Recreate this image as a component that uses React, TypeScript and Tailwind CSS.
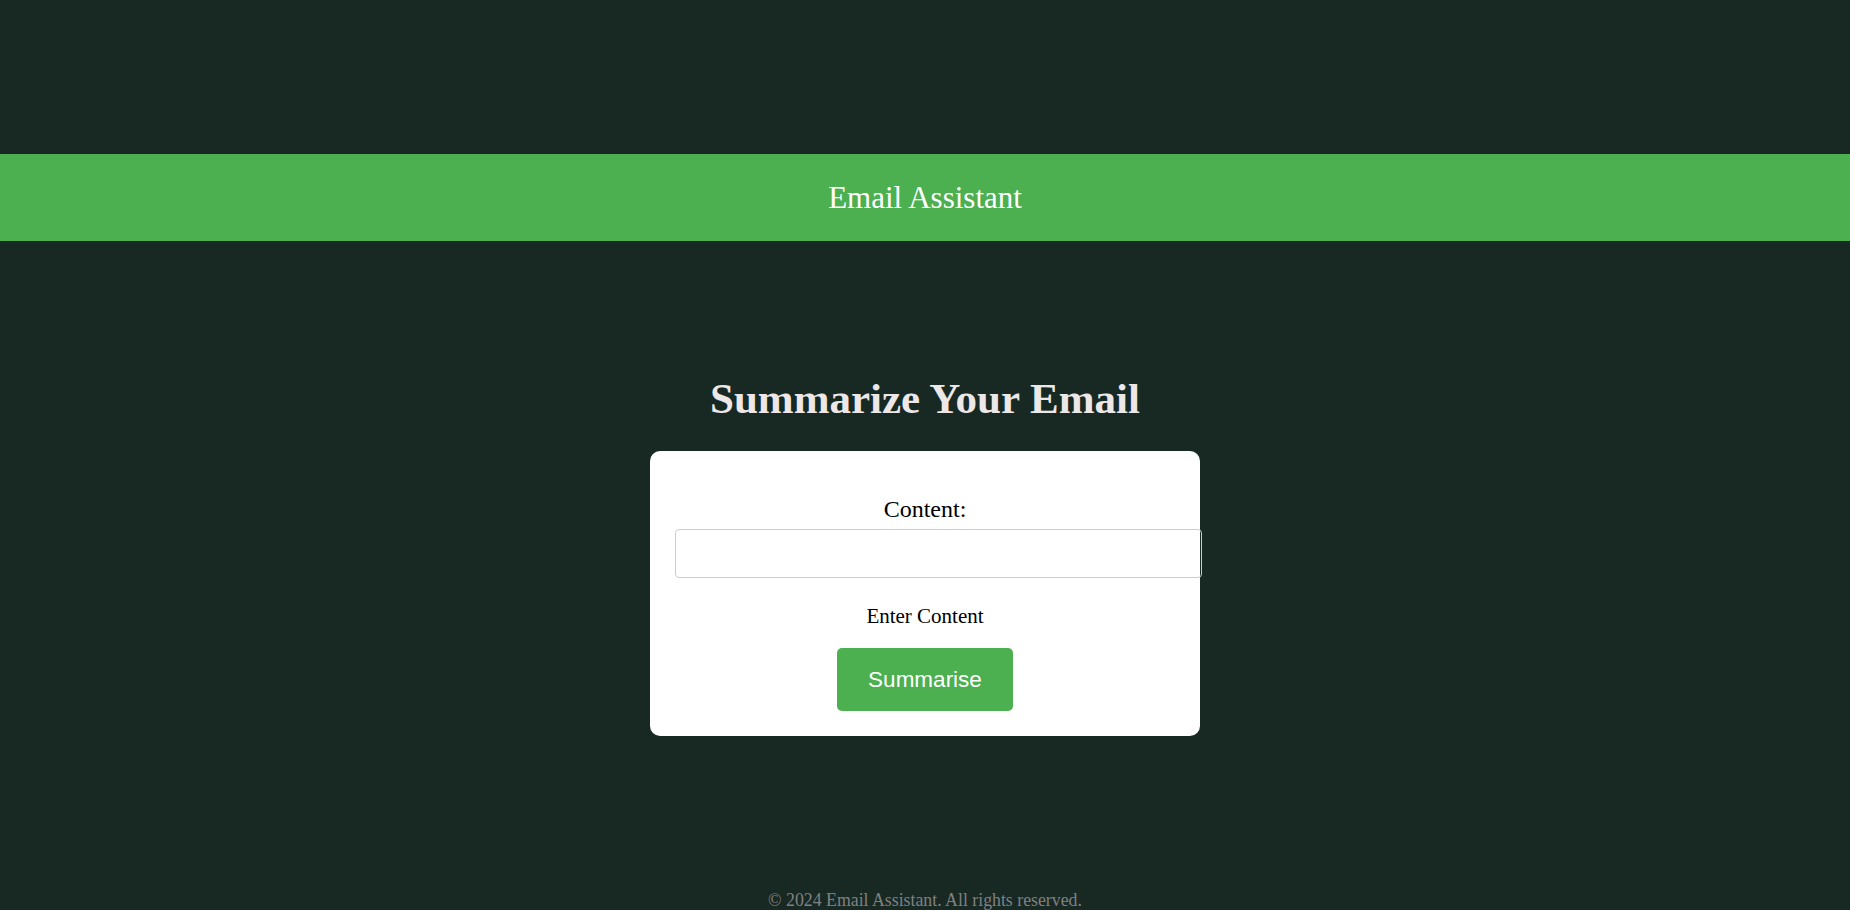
import React from 'react';

export default function App() {
  return (
    <div className="min-h-screen bg-[#182924] pt-[154px] font-['Liberation_Serif',serif]">
      <header className="bg-[#4caf50] h-[87px] flex items-center justify-center">
        <h1 className="text-white text-[31px] leading-[87px]">Email Assistant</h1>
      </header>

      <main className="flex flex-col items-center pt-[133px]">
        <h2 className="text-[#ede7e7] text-[43px] leading-[50px] font-bold">Summarize Your Email</h2>

        <div className="mt-[27px] w-[550px] bg-white rounded-[10px] px-[25px] pt-[44px] pb-[25px] flex flex-col items-center">
          <label className="block text-black text-[24px] leading-[28px]">Content:</label>
          <input
            type="text"
            className="mt-[6px] self-start w-[527px] h-[49px] border border-[#cccccc] rounded-[4px] px-3 outline-none"
          />
          <p className="mt-[26px] text-black text-[21px] leading-[24px]">Enter Content</p>
          <button className="mt-[20px] w-[176px] h-[63px] bg-[#4caf50] text-white rounded-[5px] text-[22.5px] font-['Liberation_Sans',Arial,sans-serif]">
            Summarise
          </button>
        </div>
      </main>

      <footer className="pt-[154px] pb-4 text-center">
        <p className="text-[#808080] text-[17.8px] leading-[21px]">© 2024 Email Assistant. All rights reserved.</p>
      </footer>
    </div>
  );
}
